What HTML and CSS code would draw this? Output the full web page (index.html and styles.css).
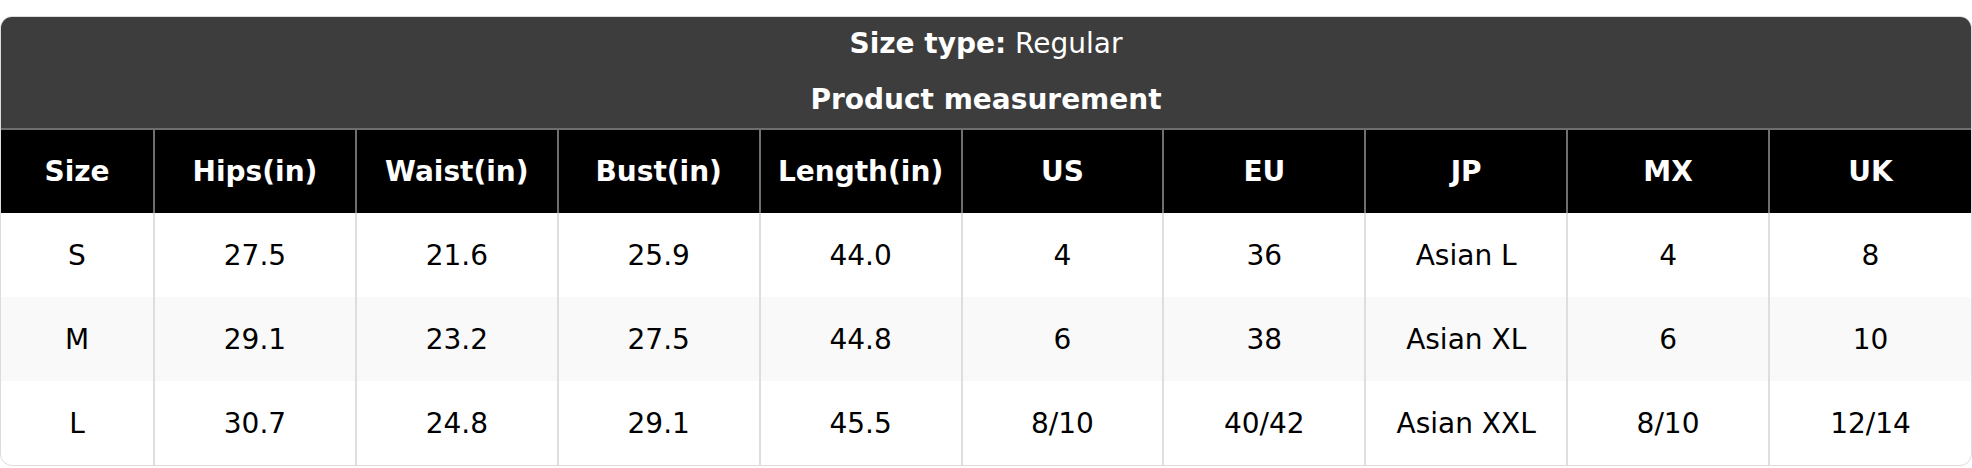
FILE: index.html
```html
<!DOCTYPE html>
<html lang="en">
<head>
<meta charset="utf-8">
<title>Size chart</title>
<link rel="stylesheet" href="styles.css">
</head>
<body>
<div class="chart">
  <div class="chart-head">
    <div class="size-type"><b>Size type:</b> Regular</div>
    <div class="chart-title">Product measurement</div>
  </div>
  <table class="size-table">
    <colgroup>
      <col class="col-first">
      <col class="col"><col class="col"><col class="col"><col class="col"><col class="col">
      <col class="col"><col class="col"><col class="col"><col class="col">
    </colgroup>
    <thead>
      <tr>
        <th>Size</th><th>Hips(in)</th><th>Waist(in)</th><th>Bust(in)</th><th>Length(in)</th>
        <th>US</th><th>EU</th><th>JP</th><th>MX</th><th>UK</th>
      </tr>
    </thead>
    <tbody>
      <tr>
        <td>S</td><td>27.5</td><td>21.6</td><td>25.9</td><td>44.0</td>
        <td>4</td><td>36</td><td>Asian L</td><td>4</td><td>8</td>
      </tr>
      <tr class="alt">
        <td>M</td><td>29.1</td><td>23.2</td><td>27.5</td><td>44.8</td>
        <td>6</td><td>38</td><td>Asian XL</td><td>6</td><td>10</td>
      </tr>
      <tr>
        <td>L</td><td>30.7</td><td>24.8</td><td>29.1</td><td>45.5</td>
        <td>8/10</td><td>40/42</td><td>Asian XXL</td><td>8/10</td><td>12/14</td>
      </tr>
    </tbody>
  </table>
</div>
</body>
</html>
```
FILE: styles.css
```css
html, body {
  margin: 0;
  padding: 0;
  background: #ffffff;
}
body {
  padding-top: 16px;
  font-family: "DejaVu Sans", "Liberation Sans", sans-serif;
}
.chart {
  width: 1972px;
  box-sizing: border-box;
  border: 1px solid #dcdcdc;
  border-radius: 12px;
  overflow: hidden;
}
.chart-head {
  background: #3d3d3d;
  color: #ffffff;
  text-align: center;
  padding: 9px 0 10px;
  display: flex;
  flex-direction: column;
  gap: 20px;
}
.size-type {
  font-size: 28px;
  line-height: 36px;
}
.size-type b {
  font-weight: bold;
}
.chart-title {
  font-size: 28px;
  line-height: 36px;
  font-weight: bold;
}
.size-table {
  width: 100%;
  border-collapse: collapse;
  table-layout: fixed;
  font-size: 28px;
}
.col-first {
  width: 153px;
}
.size-table th {
  background: #000000;
  color: #ffffff;
  font-weight: bold;
  height: 83px;
  padding: 0;
  border-top: 2px solid #6e6e6e;
  border-left: 2px solid #6e6e6e;
  text-align: center;
  vertical-align: middle;
}
.size-table td {
  color: #000000;
  height: 84px;
  padding: 0;
  text-align: center;
  vertical-align: middle;
  border-left: 2px solid #dedede;
}
.size-table th:first-child,
.size-table td:first-child {
  border-left: none;
}
.size-table tr.alt td {
  background: #f9f9f9;
}
```
